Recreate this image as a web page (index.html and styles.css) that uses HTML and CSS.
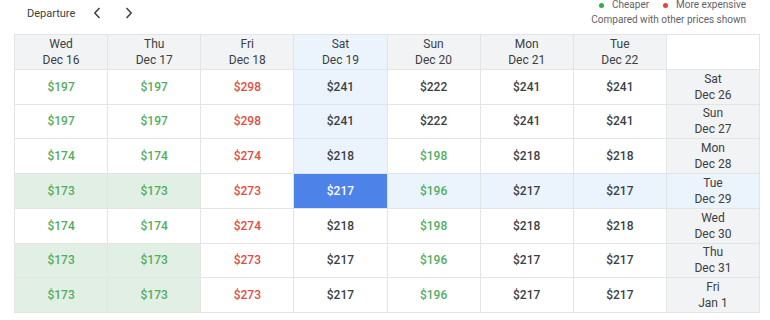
FILE: index.html
```html
<!DOCTYPE html>
<html>
<head>
<meta charset="utf-8">
<link rel="stylesheet" href="styles.css">
</head>
<body>
<div class="top">
  <div class="nav">
    <span class="dep">Departure</span>
    <button class="chev" aria-label="previous"><svg width="8" height="12" viewBox="0 0 8 12"><path d="M6.5 1 L1.8 6 L6.5 11" fill="none" stroke="#3c4043" stroke-width="1.5"/></svg></button>
    <button class="chev" aria-label="next"><svg width="8" height="12" viewBox="0 0 8 12"><path d="M1.5 1 L6.2 6 L1.5 11" fill="none" stroke="#3c4043" stroke-width="1.5"/></svg></button>
  </div>
  <div class="legend">
    <div class="keys">
      <span class="key"><i class="dot g"></i>Cheaper</span>
      <span class="key"><i class="dot r"></i>More expensive</span>
    </div>
    <div class="note">Compared with other prices shown</div>
  </div>
</div>
<div class="grid">
  <div class="hd">Wed<br>Dec 16</div>
  <div class="hd">Thu<br>Dec 17</div>
  <div class="hd">Fri<br>Dec 18</div>
  <div class="hd hl">Sat<br>Dec 19</div>
  <div class="hd">Sun<br>Dec 20</div>
  <div class="hd">Mon<br>Dec 21</div>
  <div class="hd">Tue<br>Dec 22</div>
  <div class="corner"></div>

  <div class="c gr">$197</div><div class="c gr">$197</div><div class="c rd">$298</div><div class="c hl">$241</div><div class="c">$222</div><div class="c">$241</div><div class="c">$241</div><div class="rh">Sat<br>Dec 26</div>

  <div class="c gr">$197</div><div class="c gr">$197</div><div class="c rd">$298</div><div class="c hl">$241</div><div class="c">$222</div><div class="c">$241</div><div class="c">$241</div><div class="rh">Sun<br>Dec 27</div>

  <div class="c gr">$174</div><div class="c gr">$174</div><div class="c rd">$274</div><div class="c hl">$218</div><div class="c gr">$198</div><div class="c">$218</div><div class="c">$218</div><div class="rh">Mon<br>Dec 28</div>

  <div class="c gr low">$173</div><div class="c gr low">$173</div><div class="c rd">$273</div><div class="c sel">$217</div><div class="c gr hl">$196</div><div class="c hl">$217</div><div class="c hl">$217</div><div class="rh hl">Tue<br>Dec 29</div>

  <div class="c gr">$174</div><div class="c gr">$174</div><div class="c rd">$274</div><div class="c">$218</div><div class="c gr">$198</div><div class="c">$218</div><div class="c">$218</div><div class="rh">Wed<br>Dec 30</div>

  <div class="c gr low">$173</div><div class="c gr low">$173</div><div class="c rd">$273</div><div class="c">$217</div><div class="c gr">$196</div><div class="c">$217</div><div class="c">$217</div><div class="rh">Thu<br>Dec 31</div>

  <div class="c gr low">$173</div><div class="c gr low">$173</div><div class="c rd">$273</div><div class="c">$217</div><div class="c gr">$196</div><div class="c">$217</div><div class="c">$217</div><div class="rh">Fri<br>Jan 1</div>
</div>
</body>
</html>
```
FILE: styles.css
```css
html, body {
  margin: 0;
  padding: 0;
  background: #fff;
}
body {
  font-family: Roboto, "Liberation Sans", sans-serif;
  color: #3c4043;
  width: 770px;
  height: 320px;
  overflow: hidden;
}
.top {
  display: flex;
  justify-content: space-between;
  align-items: flex-start;
  height: 34px;
  padding: 0 24px 0 27px;
}
.nav {
  display: flex;
  align-items: center;
  height: 26px;
}
.dep {
  font-size: 11px;
  margin-right: 6px;
}
.chev {
  border: 0;
  background: none;
  padding: 0;
  width: 32px;
  height: 24px;
  display: flex;
  align-items: center;
  justify-content: center;
}
.legend {
  display: flex;
  flex-direction: column;
  align-items: flex-end;
  font-size: 10px;
  color: #5f6368;
}
.keys {
  display: flex;
  gap: 14px;
  height: 12px;
  line-height: 10px;
  margin-top: -1px;
}
.key {
  display: flex;
  align-items: center;
  gap: 8px;
}
.dot {
  width: 5px;
  height: 5px;
  border-radius: 50%;
  display: inline-block;
}
.dot.g { background: #34a853; }
.dot.r { background: #ea4335; }
.note {
  margin-top: 3px;
  line-height: 12px;
}
.grid {
  margin-left: 14px;
  width: 746px;
  height: 279px;
  box-sizing: border-box;
  display: grid;
  grid-template-columns: repeat(8, 1fr);
  grid-template-rows: repeat(8, 1fr);
  gap: 1px;
  padding: 1px;
  background: #e3e4e6;
}
.grid > div {
  display: flex;
  align-items: center;
  justify-content: center;
  text-align: center;
  background: #fff;
}
.hd, .rh {
  background: #f1f3f4 !important;
  font-size: 12px;
  line-height: 16px;
  color: #3c4043;
}
.grid > .corner { background: #fff; }
.c {
  font-size: 12px;
  font-weight: 500;
  color: #3c4043;
}
.c.gr { color: #52ad5e; }
.c.rd { color: #e34c3e; }
.grid > .low { background: #e2efe4; }
.grid > .hl, .grid > .hd.hl, .grid > .rh.hl { background: #ebf4fd !important; }
.grid > .sel { background: #4d82e8; color: #fff; }
```
